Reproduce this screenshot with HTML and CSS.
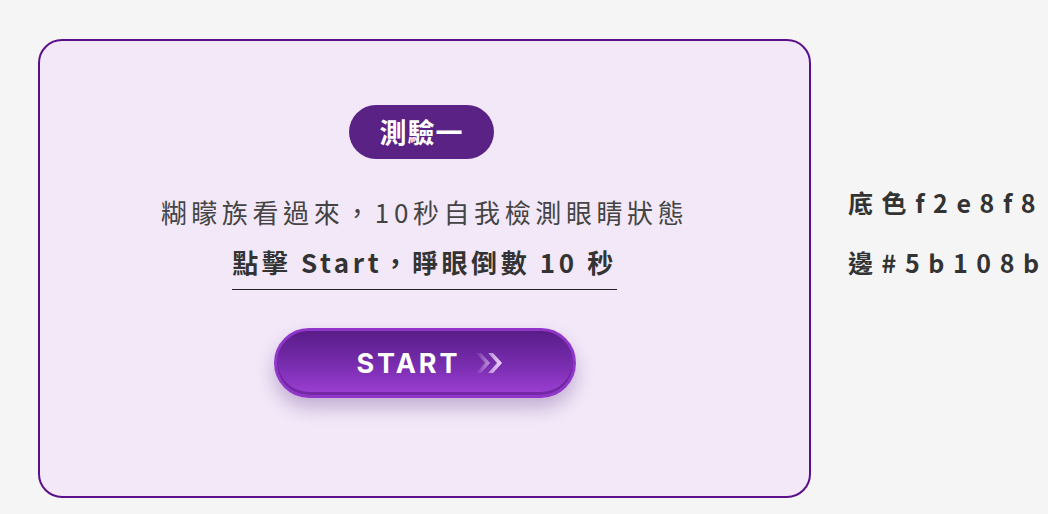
FILE: index.html
```html
<!DOCTYPE html>
<html lang="zh-Hant">
<head>
<meta charset="utf-8">
<link rel="stylesheet" href="styles.css">
</head>
<body>
<div class="page">
  <section class="card">
    <div class="badge">測驗一</div>
    <p class="lead">糊矇族看過來，10秒自我檢測眼睛狀態</p>
    <p class="hint"><span class="hint-text">點擊 Start，睜眼倒數 10 秒</span></p>
    <button class="start-btn" type="button">
      <span class="start-label">START</span>
      <svg class="chev" width="30" height="22" viewBox="0 0 30 22">
        <defs>
          <linearGradient id="cg" x1="0" y1="0" x2="1" y2="0">
            <stop offset="0" stop-color="#ffffff" stop-opacity="0"/>
            <stop offset="1" stop-color="#f0d8ff" stop-opacity="1"/>
          </linearGradient>
        </defs>
        <path d="M1 1 L10 11 L1 21 L6 21 L15 11 L6 1 Z M13 1 L22 11 L13 21 L18 21 L27 11 L18 1 Z" fill="url(#cg)"/>
      </svg>
    </button>
  </section>
  <aside class="notes">
    <p class="note">底色f2e8f8</p>
    <p class="note">邊#5b108b</p>
  </aside>
</div>
</body>
</html>
```
FILE: styles.css
```css
* { box-sizing: border-box; }
html, body { margin: 0; padding: 0; }
body {
  background: #f5f5f5;
  font-family: "Noto Sans CJK TC", "Noto Sans", sans-serif;
  color: #444;
}
.page {
  display: flex;
  align-items: flex-start;
  gap: 37px;
  padding: 39px 0 0 38px;
}
.card {
  width: 773px;
  height: 459px;
  background: #f2e8f8;
  border: 2px solid #5b108b;
  border-radius: 24px;
  display: flex;
  flex-direction: column;
  align-items: center;
  padding-top: 64px;
}
.badge {
  width: 145px;
  height: 54px;
  margin-right: 6px;
  border-radius: 27px;
  background: #5b2286;
  color: #fff;
  font-weight: 700;
  font-size: 27px;
  line-height: 54px;
  text-align: center;
  letter-spacing: 1px;
}
.lead {
  margin: 28px 0 0;
  font-size: 26px;
  line-height: 50px;
  letter-spacing: 4.6px;
  color: #444;
}
.hint {
  margin: 0;
  line-height: 1;
}
.hint-text {
  display: inline-block;
  font-size: 26px;
  font-weight: 700;
  line-height: 50px;
  letter-spacing: 3.6px;
  color: #333;
  border-bottom: 1px solid #222;
  padding-bottom: 2px;
}
.start-btn {
  margin-top: 38px;
  width: 302px;
  height: 70px;
  border-radius: 35px;
  border: 3px solid #9036c9;
  background: linear-gradient(180deg, #581d88 0%, #7a2db0 55%, #9d40d5 100%);
  box-shadow: 0 10px 18px rgba(80, 30, 120, 0.28), inset 0 -3px 0 rgba(80, 20, 120, 0.5);
  display: flex;
  align-items: center;
  justify-content: center;
  gap: 14px;
  padding: 0 0 0 12px;
  cursor: pointer;
}
.start-label {
  font-family: "Inter", "Liberation Sans", sans-serif;
  font-weight: 700;
  font-size: 27px;
  letter-spacing: 3px;
  color: #fff;
}
.chev { display: block; }
.notes {
  padding-top: 141px;
}
.note {
  margin: 0 0 16px;
  font-size: 25px;
  font-weight: 700;
  line-height: 44px;
  letter-spacing: 8.6px;
  color: #333;
  white-space: nowrap;
}
```
